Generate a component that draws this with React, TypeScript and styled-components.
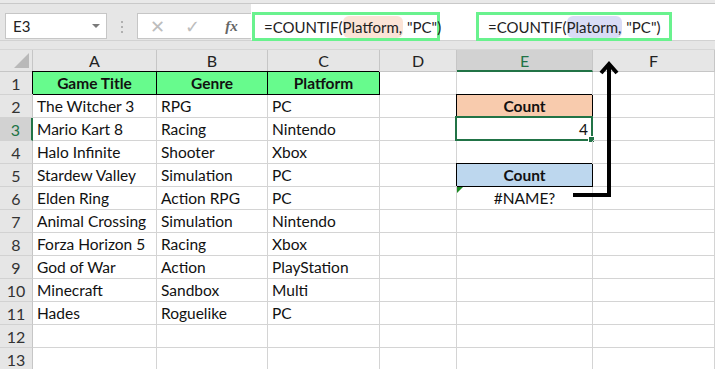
import React from "react";
import styled, { createGlobalStyle, css } from "styled-components";

const GlobalStyle = createGlobalStyle`
  body {
    margin: 0;
    background: #fff;
    overflow: hidden;
  }
`;

const FONT = `Lato, "Liberation Sans", sans-serif`;
const GREEN_MARK = "#69f28e";
const XL_GREEN = "#217346";

const S = {
  Page: styled.div`
    position: relative;
    width: 715px;
    height: 369px;
    overflow: hidden;
    font-family: ${FONT};
    color: #111;
    background: #e6e6e6;
  `,
  TopStrip: styled.div`
    height: 3px;
    background: #e9e9e9;
    border-bottom: 1px solid #c9c9c9;
  `,
  FormulaBar: styled.div`
    display: flex;
    height: 36px;
    border-bottom: 1px solid #d2d2d2;
  `,
  NameBox: styled.div`
    display: flex;
    align-items: center;
    justify-content: space-between;
    box-sizing: border-box;
    width: 102px;
    height: 26px;
    margin: 9px 0 0 5px;
    padding: 0 6px 0 7px;
    background: #fff;
    border: 1px solid #c6c6c6;
    font-size: 15px;
    color: #222;
  `,
  Caret: styled.span`
    width: 0;
    height: 0;
    border-left: 4px solid transparent;
    border-right: 4px solid transparent;
    border-top: 4px solid #7a7a7a;
  `,
  Grip: styled.div`
    display: flex;
    flex-direction: column;
    justify-content: center;
    gap: 3px;
    width: 30px;
    padding-top: 9px;
    align-items: center;
    span {
      width: 2px;
      height: 2px;
      background: #b0b0b0;
    }
  `,
  Buttons: styled.div`
    display: flex;
    align-items: center;
    box-sizing: border-box;
    width: 114px;
    height: 26px;
    margin-top: 9px;
    padding: 0 0 0 2px;
    background: #fff;
    border: 1px solid #c6c6c6;
    border-right: none;
  `,
  FxButton: styled.span<{ $dim?: boolean }>`
    width: 35px;
    text-align: center;
    font-size: ${(p) => (p.$dim ? "18px" : "15px")};
    color: ${(p) => (p.$dim ? "#bdbdbd" : "#666")};
    ${(p) =>
      !p.$dim &&
      css`
        font-family: "Liberation Serif", serif;
        font-style: italic;
        font-weight: bold;
        padding-left: 4px;
      `}
  `,
  Input: styled.div`
    position: relative;
    flex: 1;
    background: #fff;
  `,
  Mark: styled.div<{ $left: number; $width: number }>`
    position: absolute;
    top: 8px;
    left: ${(p) => p.$left}px;
    width: ${(p) => p.$width}px;
    height: 29px;
    box-sizing: border-box;
    border: 3px solid ${GREEN_MARK};
    display: flex;
    align-items: center;
    padding-left: 9px;
    font-size: 15px;
    color: #222;
    white-space: pre;
  `,
  Ref: styled.span<{ $tone: "orange" | "blue" }>`
    background: ${(p) => (p.$tone === "orange" ? "#fbe3d6" : "#d9dcf6")};
    border-radius: 6px;
    padding: 2px 1px 2px 0;
  `,
  Sheet: styled.div`
    display: grid;
    grid-template-columns: 33px 124px 111px 112px 77px 136px 122px;
    grid-template-rows: 22px repeat(13, 23px);
    margin-top: 8px;
    border-top: 1px solid #d6d6d6;
    background: #fff;
  `,
  Corner: styled.div`
    position: relative;
    background: #e6e6e6;
    border-right: 1px solid #c6c6c6;
    border-bottom: 1px solid #c6c6c6;
    box-sizing: border-box;
    &::after {
      content: "";
      position: absolute;
      right: 3px;
      bottom: 3px;
      border-left: 15px solid transparent;
      border-bottom: 15px solid #b9b9b9;
    }
  `,
  ColHead: styled.div<{ $active?: boolean }>`
    display: flex;
    align-items: center;
    justify-content: center;
    box-sizing: border-box;
    font-size: 16px;
    background: ${(p) => (p.$active ? "#d2d2d2" : "#e6e6e6")};
    color: ${(p) => (p.$active ? XL_GREEN : "#222")};
    border-right: 1px solid #c6c6c6;
    border-bottom: ${(p) => (p.$active ? `2px solid ${XL_GREEN}` : "1px solid #c6c6c6")};
  `,
  RowHead: styled.div<{ $active?: boolean }>`
    display: flex;
    align-items: center;
    justify-content: center;
    box-sizing: border-box;
    font-size: 16px;
    background: ${(p) => (p.$active ? "#d2d2d2" : "#e6e6e6")};
    color: ${(p) => (p.$active ? XL_GREEN : "#333")};
    border-bottom: 1px solid #d2d2d2;
    border-right: ${(p) => (p.$active ? `2px solid ${XL_GREEN}` : "1px solid #c6c6c6")};
  `,
  Cell: styled.div<{
    $fill?: string;
    $bold?: boolean;
    $align?: "left" | "center" | "right";
    $boxed?: boolean;
  }>`
    position: relative;
    box-sizing: border-box;
    padding: 0 4px;
    line-height: 22px;
    font-size: 15.5px;
    white-space: nowrap;
    overflow: visible;
    text-align: ${(p) => p.$align ?? "left"};
    font-weight: ${(p) => (p.$bold ? 700 : 400)};
    background: ${(p) => p.$fill ?? "transparent"};
    border-right: 1px solid ${(p) => (p.$boxed ? "#000" : "#d4d4d4")};
    border-bottom: 1px solid ${(p) => (p.$boxed ? "#000" : "#d4d4d4")};
    ${(p) =>
      p.$boxed &&
      css`
        box-shadow: -1px -1px 0 #000;
      `}
  `,
  Selection: styled.span`
    position: absolute;
    inset: -2px -1px -1px -2px;
    border: 2px solid ${XL_GREEN};
    pointer-events: none;
    &::after {
      content: "";
      position: absolute;
      right: -4px;
      bottom: -4px;
      width: 5px;
      height: 5px;
      background: ${XL_GREEN};
      border: 1px solid #fff;
    }
  `,
  ErrorFlag: styled.span`
    position: absolute;
    top: 0;
    left: 0;
    border-top: 6px solid #1b8a22;
    border-right: 6px solid transparent;
  `,
  Arrow: styled.svg`
    position: absolute;
    left: 0;
    top: 0;
    pointer-events: none;
  `,
};

const games: [string, string, string][] = [
  ["The Witcher 3", "RPG", "PC"],
  ["Mario Kart 8", "Racing", "Nintendo"],
  ["Halo Infinite", "Shooter", "Xbox"],
  ["Stardew Valley", "Simulation", "PC"],
  ["Elden Ring", "Action RPG", "PC"],
  ["Animal Crossing", "Simulation", "Nintendo"],
  ["Forza Horizon 5", "Racing", "Xbox"],
  ["God of War", "Action", "PlayStation"],
  ["Minecraft", "Sandbox", "Multi"],
  ["Hades", "Roguelike", "PC"],
];

const columns = ["A", "B", "C", "D", "E", "F"];

const renderE = (row: number) => {
  switch (row) {
    case 2:
      return <S.Cell $fill="#f8cbad" $bold $align="center" $boxed>Count</S.Cell>;
    case 3:
      return (
        <S.Cell $align="right">
          4
          <S.Selection />
        </S.Cell>
      );
    case 5:
      return <S.Cell $fill="#bdd7ee" $bold $align="center" $boxed>Count</S.Cell>;
    case 6:
      return (
        <S.Cell $align="center">
          <S.ErrorFlag />
          #NAME?
        </S.Cell>
      );
    default:
      return <S.Cell />;
  }
};

const App: React.FC = () => {
  const rows = Array.from({ length: 13 }, (_, i) => i + 1);

  return <S.Page>
    <GlobalStyle />
    <S.TopStrip />
    <S.FormulaBar>
      <S.NameBox>
        E3
        <S.Caret />
      </S.NameBox>
      <S.Grip><span /><span /><span /></S.Grip>
      <S.Buttons>
        <S.FxButton $dim>✕</S.FxButton>
        <S.FxButton $dim>✓</S.FxButton>
        <S.FxButton>fx</S.FxButton>
      </S.Buttons>
      <S.Input>
        <S.Mark $left={1} $width={188}>
          {"=COUNTIF("}<S.Ref $tone="orange">Platform,</S.Ref>{" \"PC\")"}
        </S.Mark>
        <S.Mark $left={225} $width={196}>
          {"=COUNTIF("}<S.Ref $tone="blue">Platorm,</S.Ref>{" \"PC\")"}
        </S.Mark>
      </S.Input>
    </S.FormulaBar>

    <S.Sheet>
      <S.Corner />
      {columns.map((c) => (
        <S.ColHead key={c} $active={c === "E"}>{c}</S.ColHead>
      ))}
      {rows.map((r) => {
        const game = r >= 2 && r <= 11 ? games[r - 2] : null;
        return (
          <React.Fragment key={r}>
            <S.RowHead $active={r === 3}>{r}</S.RowHead>
            {r === 1 ? (
              <>
                <S.Cell $fill="#67fb8d" $bold $align="center" $boxed>Game Title</S.Cell>
                <S.Cell $fill="#67fb8d" $bold $align="center" $boxed>Genre</S.Cell>
                <S.Cell $fill="#67fb8d" $bold $align="center" $boxed>Platform</S.Cell>
              </>
            ) : (
              <>
                <S.Cell>{game?.[0]}</S.Cell>
                <S.Cell>{game?.[1]}</S.Cell>
                <S.Cell>{game?.[2]}</S.Cell>
              </>
            )}
            <S.Cell />
            {renderE(r)}
            <S.Cell />
          </React.Fragment>
        );
      })}
    </S.Sheet>

    <S.Arrow width="715" height="369" viewBox="0 0 715 369">
      <polyline points="573,195 609,195 609,66" fill="none" stroke="#000" strokeWidth="4" />
      <polyline points="601,73 609,64 617,73" fill="none" stroke="#000" strokeWidth="4" />
    </S.Arrow>
  </S.Page>;
};

export default App;
